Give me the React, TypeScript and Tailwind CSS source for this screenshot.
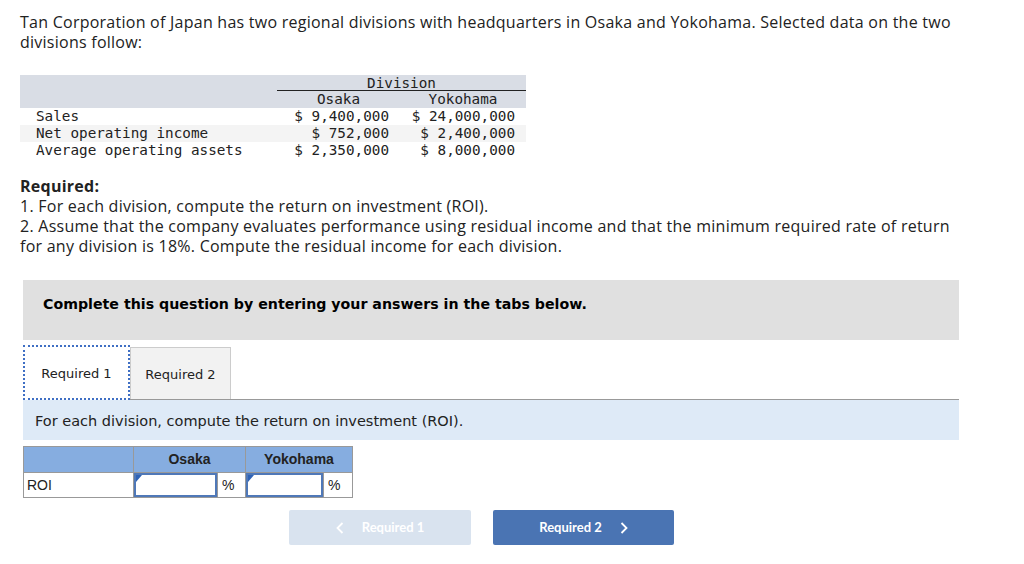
import React from 'react';

const mono = { fontFamily: '"DejaVu Sans Mono", monospace' };
const body = { fontFamily: '"Open Sans", sans-serif' };
const verdana = { fontFamily: '"DejaVu Sans", Verdana, sans-serif' };

const rows = [
  { label: 'Sales', osaka: '$ 9,400,000', yoko: '$ 24,000,000', shade: false },
  { label: 'Net operating income', osaka: '$ 752,000', yoko: '$ 2,400,000', shade: true },
  { label: 'Average operating assets', osaka: '$ 2,350,000', yoko: '$ 8,000,000', shade: false },
];

const ChevronLeft = () => (
  <svg width="8" height="12" viewBox="0 0 8 12" fill="none">
    <path d="M6.5 1 L1.5 6 L6.5 11" stroke="currentColor" strokeWidth="1.8" />
  </svg>
);

const ChevronRight = () => (
  <svg width="8" height="12" viewBox="0 0 8 12" fill="none">
    <path d="M1.5 1 L6.5 6 L1.5 11" stroke="currentColor" strokeWidth="1.8" />
  </svg>
);

const AnswerInput = () => (
  <div className="relative h-full w-full border-2 border-[#4f78b8] bg-white">
    <div className="absolute left-0 top-0 h-0 w-0 border-t-[7px] border-r-[6px] border-t-[#2f63b6] border-r-transparent" />
  </div>
);

export default function App() {
  return (
    <div className="min-h-[564px] bg-white px-5 pt-[12px] text-[#222]">
      {/* Intro */}
      <p className="w-[945px] text-[16px] leading-[20px] tracking-[0.25px]" style={body}>
        Tan Corporation of Japan has two regional divisions with headquarters in Osaka and Yokohama. Selected data on the two divisions follow:
      </p>

      {/* Data table */}
      <div className="mt-[23px] w-[506px] text-[14.3px] leading-[17px] text-[#222]" style={mono}>
        <div className="flex bg-[#d9dde5]">
          <div className="w-[257px]" />
          <div className="flex-1">
            <div className="h-[16px] border-b border-[#222] text-center leading-[16px]">Division</div>
            <div className="flex h-[17px]">
              <div className="w-[123px] text-center">Osaka</div>
              <div className="flex-1 text-center">Yokohama</div>
            </div>
          </div>
        </div>
        {rows.map((r) => (
          <div key={r.label} className={`flex h-[17px] ${r.shade ? 'bg-[#f4f4f4]' : ''}`}>
            <div className="w-[257px] whitespace-pre pl-4">{r.label}</div>
            <div className="w-[123px] whitespace-pre pr-[11px] text-right">{r.osaka}</div>
            <div className="flex-1 whitespace-pre pr-[11px] text-right">{r.yoko}</div>
          </div>
        ))}
      </div>

      {/* Required */}
      <div className="mt-[17px] w-[945px] text-[16px] leading-[20px] tracking-[0.25px]" style={body}>
        <p className="font-bold">Required:</p>
        <p>1. For each division, compute the return on investment (ROI).</p>
        <p>
          2. Assume that the company evaluates performance using residual income and that the minimum required rate of return for any division is 18%. Compute the residual income for each division.
        </p>
      </div>

      {/* Instructions box */}
      <div
        className="ml-[3px] mt-[24px] h-[60px] w-[936px] bg-[#e0e0e0] pl-5 pt-[15px] text-[14.2px] font-bold leading-[18px] text-black"
        style={verdana}
      >
        Complete this question by entering your answers in the tabs below.
      </div>

      {/* Tabs */}
      <div className="ml-[3px] mt-[5px] w-[936px]" style={verdana}>
        <div className="flex items-end">
          <div className="relative z-10 -mb-px flex h-[55px] w-[107px] items-center justify-center bg-white pt-[3px] text-[13px] text-[#222] outline-2 -outline-offset-2 outline-dotted outline-[#3f6fc4]">
            Required 1
          </div>
          <div className="flex h-[52px] w-[101px] items-center justify-center border border-b-0 border-[#cccccc] bg-[#f2f2f2] pt-[2px] text-[13px] text-[#222]">
            Required 2
          </div>
        </div>
        <div className="flex h-[41px] items-center border-t border-[#999] bg-[#deeaf7] pl-3 pt-[3px] text-[14.5px] text-[#222]">
          For each division, compute the return on investment (ROI).
        </div>
      </div>

      {/* ROI table */}
      <table
        className="ml-[3px] mt-[6px] border-collapse text-[14px] text-[#222]"
        style={{ fontFamily: '"Liberation Sans", Arial, sans-serif' }}
      >
        <tbody>
          <tr className="h-[26px] bg-[#86ade0]">
            <td className="w-[110px] border border-[#999]" />
            <td colSpan={2} className="w-[112px] border border-[#999] text-center font-bold">Osaka</td>
            <td colSpan={2} className="w-[107px] border border-[#999] text-center font-bold">Yokohama</td>
          </tr>
          <tr className="h-[25px]">
            <td className="border border-[#999] pl-[3px]">ROI</td>
            <td className="h-[25px] w-[84px] border border-[#999] p-0">
              <AnswerInput />
            </td>
            <td className="w-[28px] border border-[#999] pl-1">%</td>
            <td className="h-[25px] w-[78px] border border-[#999] p-0">
              <AnswerInput />
            </td>
            <td className="w-[29px] border border-[#999] pl-1">%</td>
          </tr>
        </tbody>
      </table>

      {/* Nav buttons */}
      <div className="ml-[269px] mt-[12px] flex gap-[22px] text-[13px] font-bold text-white" style={{ fontFamily: 'Lato, sans-serif' }}>
        <div className="flex h-[35px] w-[182px] items-center justify-center gap-[18px] rounded-[2px] bg-[#d9e3ef]">
          <ChevronLeft />
          <span>Required 1</span>
        </div>
        <div className="flex h-[35px] w-[181px] items-center justify-center gap-[18px] rounded-[2px] bg-[#4a74b3]">
          <span>Required 2</span>
          <ChevronRight />
        </div>
      </div>
    </div>
  );
}
